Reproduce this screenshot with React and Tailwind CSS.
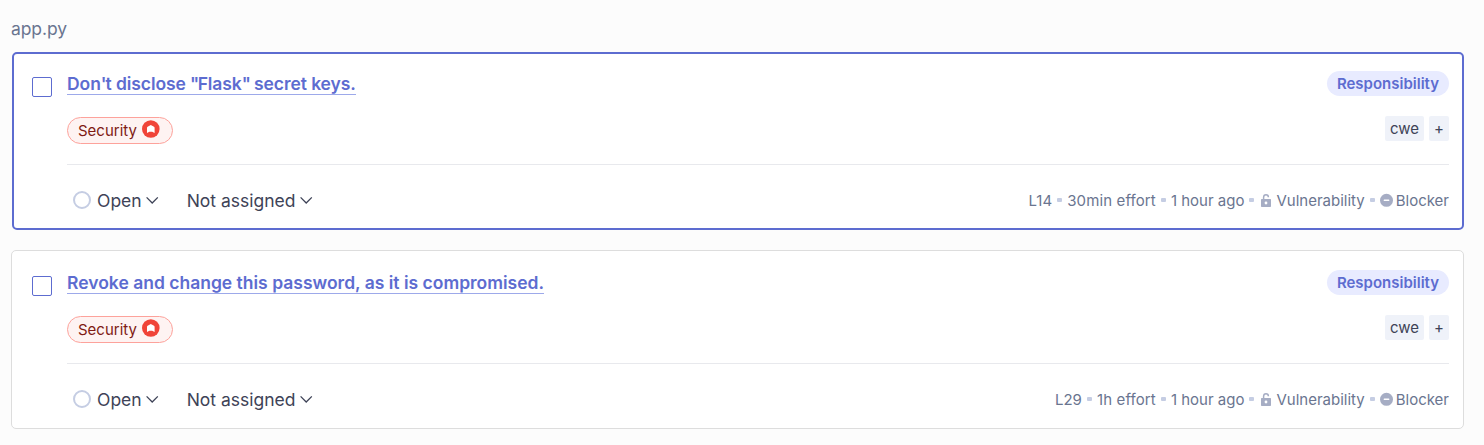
import React from 'react';

function Chevron() {
  return (
    <svg className="block h-[20px] w-[20px] shrink-0" viewBox="0 0 20 20" fill="none">
      <path d="M4.6 7.4L10.2 13L15.8 7.4" stroke="#3e4357" strokeWidth="1.3" />
    </svg>
  );
}

function LockIcon() {
  return (
    <svg className="mr-[3px] block h-[20px] w-[14px] shrink-0" viewBox="0 0 14 20" fill="none">
      <path d="M4.6 9.5V7.3C4.6 5.6 5.6 4.7 7 4.7S9.4 5.6 9.4 7.2" stroke="#a6adc4" strokeWidth="1.5" />
      <path d="M3 9H11C11.6 9 12 9.4 12 10V16C12 16.6 11.6 17 11 17H3C2.4 17 2 16.6 2 16V10C2 9.4 2.4 9 3 9Z" fill="#a6adc4" />
      <circle cx="7" cy="13" r="1.4" fill="white" />
    </svg>
  );
}

function BlockerIcon() {
  return (
    <svg className="mr-[3px] block h-[14px] w-[13px] shrink-0" viewBox="0 0 13 14">
      <circle cx="6.5" cy="7.3" r="6.5" fill="#a6adc4" />
      <rect x="3.7" y="6.5" width="5.6" height="1.6" rx="0.5" fill="white" />
    </svg>
  );
}

function SeverityIcon() {
  return (
    <svg className="-mt-[3px] ml-[5px] block h-[18px] w-[18px] shrink-0" viewBox="0 0 18 18">
      <circle cx="8.8" cy="9" r="8.8" fill="#f04438" />
      <path d="M8.8 5L12 6.8Q12.6 7.2 12.6 7.8V13L10.2 11.8H7.4L5 13V7.8Q5 7.2 5.6 6.8Z" fill="white" />
    </svg>
  );
}

function Dot({ className }) {
  return <span className={`h-[4px] w-[5px] shrink-0 rounded-[1px] bg-[#c5cde3] ${className}`} />;
}

function Issue({ title, line, effort, selected }) {
  return (
    <article
      className={
        selected
          ? 'ml-px flex h-[178px] rounded-[5px] border-2 border-[#5d6cd0] bg-white pt-[17px] pr-[13px] pl-[18px]'
          : 'flex h-[179px] rounded-[5px] border border-[#dddddd] bg-white pt-[19px] pr-[14px] pl-[20px]'
      }
    >
      <button
        aria-label="Select issue"
        className="mt-[6px] mr-[15px] h-[20px] w-[20px] shrink-0 rounded-[2px] border border-[#5d6cd0] bg-white"
      />
      <div className="min-w-0 flex-1">
        <div className="flex h-[25px] items-start justify-between">
          <a className="block h-[24px] border-b border-[#9da9ea] text-[17.5px] leading-[25px] font-semibold text-[#5d6cd0]">
            {title}
          </a>
          <span className="flex h-[25px] items-center rounded-full bg-[#e8ebff] px-[10px] pt-[2px] text-[15px] font-semibold text-[#5d6cd0]">
            Responsibility
          </span>
        </div>
        <div className="mt-[20px] flex h-[49px] items-start justify-between border-b border-[#e8e9ed]">
          <span className="mt-px flex h-[27px] items-center rounded-full border border-[#fda29b] bg-[#fef3f2] pr-[12px] pl-[10px] text-[15px] text-[#801b14]">
            <span className="pt-[2px]">Security</span>
            <SeverityIcon />
          </span>
          <div className="flex gap-[5px] text-[15px] leading-[25px] text-[#3e4357]">
            <span className="h-[25px] rounded-[2px] bg-[#eff2f9] px-[5px]">cwe</span>
            <span className="h-[25px] w-[20px] rounded-[2px] bg-[#eff2f9] text-center">+</span>
          </div>
        </div>
        <div className="mt-[23px] flex h-[24px] items-center justify-between">
          <div className="flex items-center text-[17.5px] text-[#3e4357]">
            <span className="mr-[6px] ml-[6px] h-[18px] w-[18px] rounded-full border-2 border-[#c5cde3]" />
            <span className="pt-[2px] leading-[24px]">Open</span>
            <Chevron />
            <span className="ml-[25px] pt-[2px] leading-[24px]">Not assigned</span>
            <Chevron />
          </div>
          <div className="flex items-center text-[15px] leading-[24px] text-[#6a7590]">
            <span className="pt-[2px]">{line}</span>
            <Dot className="mx-[5px]" />
            <span className="pt-[2px] tracking-[0.13px]">{effort}</span>
            <Dot className="mx-[5px]" />
            <span className="pt-[2px]">1 hour ago</span>
            <Dot className="mx-[5px]" />
            <LockIcon />
            <span className="pt-[2px]">Vulnerability</span>
            <Dot className="mx-[5px]" />
            <BlockerIcon />
            <span className="pt-[2px]">Blocker</span>
          </div>
        </div>
      </div>
    </article>
  );
}

const flaskTitle = (
  <span className="tracking-[-0.08px]">
    Don<span className="tracking-[-1px]">'</span>t disclose <span className="tracking-[-1.6px]">"</span>Flask
    <span className="tracking-[-1.2px]">"</span> secret keys.
  </span>
);

export default function App() {
  return (
    <main className="h-[445px] w-[1484px] overflow-hidden bg-[#fcfcfc] pt-[17px] pr-[20px] pl-[11px] font-['Inter',sans-serif] antialiased">
      <h2 className="h-[35px] text-[17.5px] leading-[24px] tracking-[-0.1px] text-[#6a7590]">app.py</h2>
      <div className="flex flex-col gap-[20px]">
        <Issue title={flaskTitle} line="L14" effort="30min effort" selected />
        <Issue title="Revoke and change this password, as it is compromised." line="L29" effort="1h effort" />
      </div>
    </main>
  );
}
